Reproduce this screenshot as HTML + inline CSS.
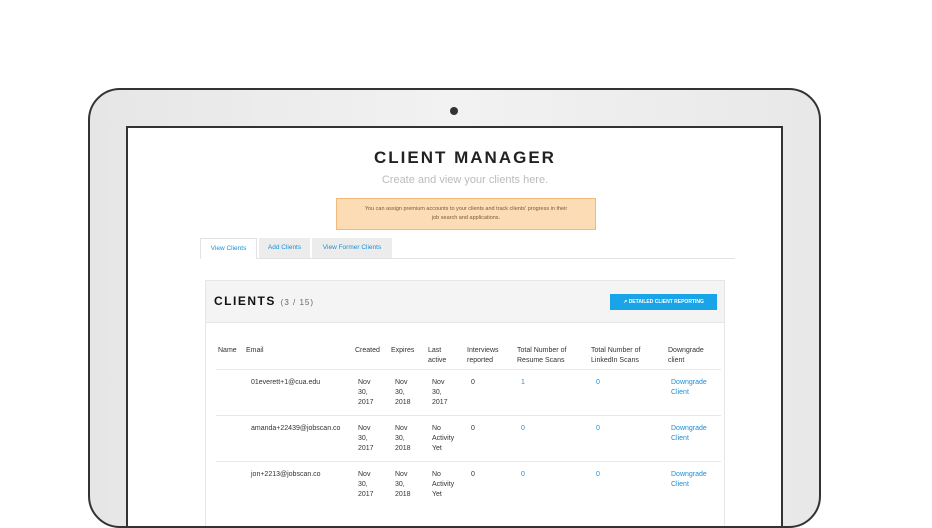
<!DOCTYPE html>
<html><head><style>
*{margin:0;padding:0;box-sizing:border-box}
body{width:932px;height:500px;background:#fff;position:relative;overflow:hidden;font-family:"Liberation Sans",sans-serif}
.lap{position:absolute;left:88px;top:88px;width:733px;height:440px;border:2px solid #333;border-radius:32px;background:linear-gradient(90deg,#e6e6e6,#f2f2f2 50%,#e8e8e8)}
.cam{position:absolute;left:450px;top:107px;width:8px;height:8px;border-radius:50%;background:#333}
.scr{position:absolute;left:126px;top:126px;width:657px;height:400px;border:2px solid #333;border-bottom:none;background:#fff;overflow:hidden}
.a{position:absolute;white-space:nowrap}
h1{position:absolute;left:0;width:674px;top:20px;text-align:center;font-size:17px;letter-spacing:2px;color:#222;font-weight:bold}
.sub{left:0;width:674px;top:46px;text-align:center;font-size:11px;color:#bbb}
.note{position:absolute;left:208px;top:70px;width:260px;height:32px;background:#fbdcb4;border:1px solid #f3b978;font-size:5.5px;color:#7a5a3a;text-align:center;line-height:9px;padding-top:6px}
.tabs{position:absolute;left:72px;top:110px;width:535px;height:21px;border-bottom:1px solid #e3e3e3}
.tab{position:absolute;top:0;height:20px;font-size:6.5px;color:#1a8fd8;line-height:20px;text-align:center;background:#ececec}
.card{position:absolute;left:77px;top:152px;width:520px;height:260px;border:1px solid #e6e6e6;background:#fff}
.ch{height:42px;background:#f4f4f4;border-bottom:1px solid #e6e6e6;position:relative}
.ch b{position:absolute;left:8px;top:13px;font-size:12px;letter-spacing:1.5px;color:#111}
.ch span{font-size:8px;color:#666;font-weight:normal;letter-spacing:1px}
.btn{position:absolute;left:404px;top:13px;width:107px;height:16px;background:#1aa4e8;color:#fff;font-size:5px;font-weight:bold;text-align:center;line-height:16px}
.t{font-size:7px;color:#333;line-height:10px}
.bl{color:#1a8fd8}
.hr{position:absolute;left:88px;width:505px;height:1px;background:#e8e8e8}
</style></head><body>
<div class="lap"></div><div class="cam"></div>
<div class="scr">
<h1>CLIENT MANAGER</h1>
<div class="a sub">Create and view your clients here.</div>
<div class="note">You can assign premium accounts to your clients and track clients' progress in their<br>job search and applications.</div>
<div class="tabs">
<div class="tab" style="left:0;width:57px;background:#fff;border:1px solid #e3e3e3;border-bottom:none;height:21px">View Clients</div>
<div class="tab" style="left:59px;width:51px">Add Clients</div>
<div class="tab" style="left:112px;width:80px">View Former Clients</div>
</div>
<div class="card"><div class="ch"><b>CLIENTS <span>(3 / 15)</span></b><div class="btn">↗ DETAILED CLIENT REPORTING</div></div></div>
<div class="a t" style="left:90px;top:218px">Name</div>
<div class="a t" style="left:118px;top:218px">Email</div>
<div class="a t" style="left:227px;top:218px">Created</div>
<div class="a t" style="left:263px;top:218px">Expires</div>
<div class="a t" style="left:300px;top:218px">Last<br>active</div>
<div class="a t" style="left:339px;top:218px">Interviews<br>reported</div>
<div class="a t" style="left:389px;top:218px">Total Number of<br>Resume Scans</div>
<div class="a t" style="left:463px;top:218px">Total Number of<br>LinkedIn Scans</div>
<div class="a t" style="left:540px;top:218px">Downgrade<br>client</div>
<div class="hr" style="top:241px"></div>
<div class="a t" style="left:123px;top:250px">01everett+1@cua.edu</div>
<div class="a t" style="left:230px;top:250px">Nov<br>30,<br>2017</div>
<div class="a t" style="left:267px;top:250px">Nov<br>30,<br>2018</div>
<div class="a t" style="left:304px;top:250px">Nov<br>30,<br>2017</div>
<div class="a t" style="left:343px;top:250px">0</div>
<div class="a t bl" style="left:393px;top:250px">1</div>
<div class="a t bl" style="left:468px;top:250px">0</div>
<div class="a t bl" style="left:543px;top:250px">Downgrade<br>Client</div>
<div class="hr" style="top:287px"></div>
<div class="a t" style="left:123px;top:296px">amanda+22439@jobscan.co</div>
<div class="a t" style="left:230px;top:296px">Nov<br>30,<br>2017</div>
<div class="a t" style="left:267px;top:296px">Nov<br>30,<br>2018</div>
<div class="a t" style="left:304px;top:296px">No<br>Activity<br>Yet</div>
<div class="a t" style="left:343px;top:296px">0</div>
<div class="a t bl" style="left:393px;top:296px">0</div>
<div class="a t bl" style="left:468px;top:296px">0</div>
<div class="a t bl" style="left:543px;top:296px">Downgrade<br>Client</div>
<div class="hr" style="top:333px"></div>
<div class="a t" style="left:123px;top:342px">jon+2213@jobscan.co</div>
<div class="a t" style="left:230px;top:342px">Nov<br>30,<br>2017</div>
<div class="a t" style="left:267px;top:342px">Nov<br>30,<br>2018</div>
<div class="a t" style="left:304px;top:342px">No<br>Activity<br>Yet</div>
<div class="a t" style="left:343px;top:342px">0</div>
<div class="a t bl" style="left:393px;top:342px">0</div>
<div class="a t bl" style="left:468px;top:342px">0</div>
<div class="a t bl" style="left:543px;top:342px">Downgrade<br>Client</div>
</div>
</body></html>
